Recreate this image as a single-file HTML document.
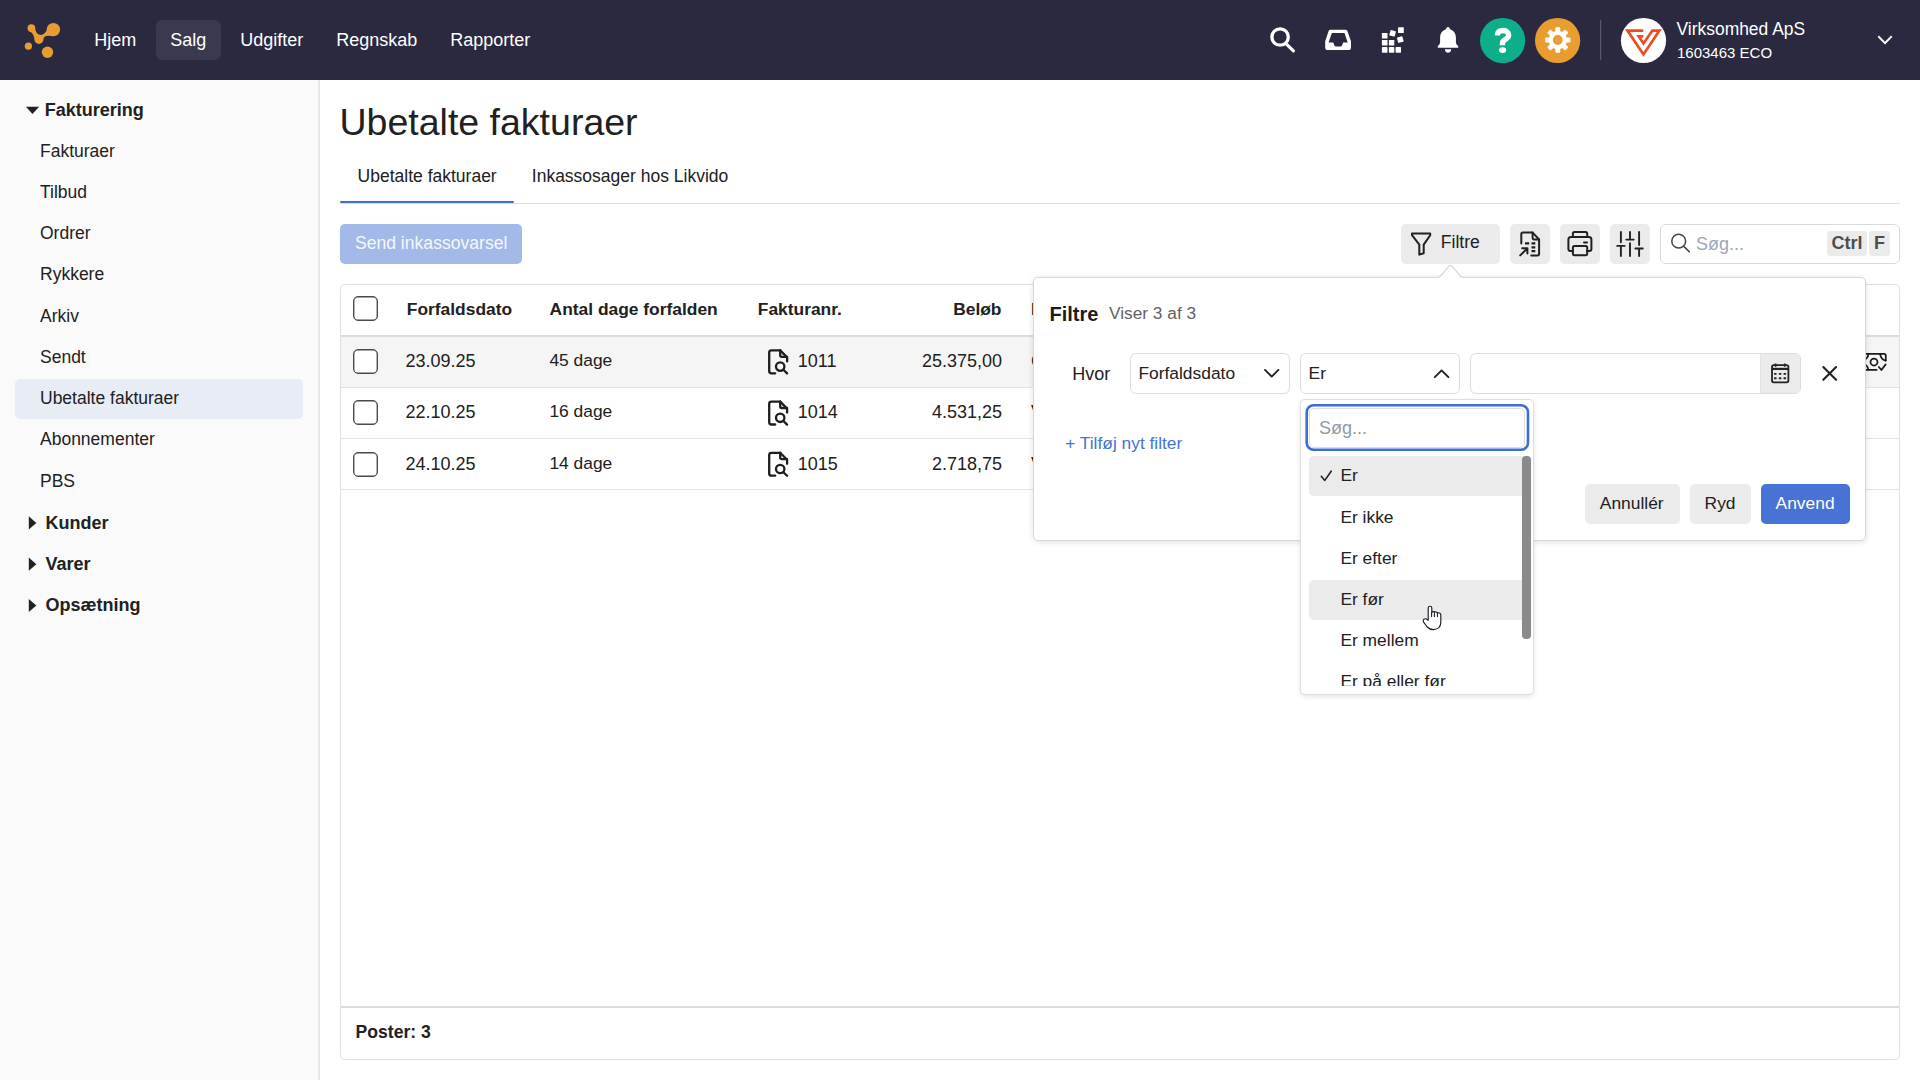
<!DOCTYPE html>
<html lang="da">
<head>
<meta charset="utf-8">
<title>Ubetalte fakturaer</title>
<style>
html,body{margin:0;padding:0;}
body{width:1920px;height:1080px;overflow:hidden;position:relative;background:#fff;font-family:"Liberation Sans",sans-serif;color:#212121;}
.a{position:absolute;}
.t{position:absolute;white-space:nowrap;line-height:1;font-size:18px;}
.b{font-weight:bold;}
svg{position:absolute;overflow:visible;}
#hdr{left:0;top:0;width:1920px;height:80px;background:#2a2940;}
.cb{width:23px;height:23px;border:1px solid #4a4a4a;box-shadow:inset 0 0 0 0.4px #4a4a4a;border-radius:5px;background:#fff;}
#side{left:0;top:80px;width:318px;height:1000px;background:#fafafa;border-right:2px solid #e8e8e8;}
</style>
</head>
<body>
<!-- HEADER -->
<div id="hdr" class="a">
  <svg width="1920" height="80" style="left:0;top:0">
    <g fill="#e99d30">
      <circle cx="31.4" cy="28.1" r="3.9"/>
      <circle cx="53.4" cy="29.6" r="6.7"/>
      <circle cx="38.9" cy="39.4" r="4.5"/>
      <circle cx="28.4" cy="46.2" r="3.6"/>
      <circle cx="47.5" cy="52.3" r="5.7"/>
      <path d="M28.6 30.6 C31.8 32.3 34 35 34.5 39 L43.3 39 C43.5 37 45.5 35.6 48.5 35.7 L53.4 36.3 L51 24 L47.2 28.8 C46 32.8 43.6 34.9 40.8 34.9 C37.8 34.9 35.7 32.6 35.2 28.6 L31.4 28.1 Z"/>
    </g>
  </svg>
  <div class="a" style="left:156px;top:20px;width:65px;height:40px;border-radius:6px;background:#3a394f"></div>
  <span class="t" style="left:94.3px;top:30.6px;color:#fff">Hjem</span>
  <span class="t" style="left:170.2px;top:30.6px;color:#fff">Salg</span>
  <span class="t" style="left:240.3px;top:30.6px;color:#fff">Udgifter</span>
  <span class="t" style="left:336.2px;top:30.6px;color:#fff">Regnskab</span>
  <span class="t" style="left:450.2px;top:30.6px;color:#fff">Rapporter</span>

  <svg width="1920" height="80" style="left:0;top:0">
    <!-- search -->
    <circle cx="1280.1" cy="37" r="8.2" fill="none" stroke="#fff" stroke-width="3.3"/>
    <line x1="1286.2" y1="43.8" x2="1293.4" y2="50.8" stroke="#fff" stroke-width="3.2" stroke-linecap="round"/>
    <!-- inbox -->
    <path fill="#fff" fill-rule="evenodd" d="M1330.4 29.7 L1345.4 29.7 Q1346.9 29.7 1347.4 31 L1351 41.2 L1351 48 Q1351 50.1 1349 50.1 L1327.2 50.1 Q1325.2 50.1 1325.2 48 L1325.2 41.2 L1328.6 31 Q1329 29.7 1330.4 29.7 Z M1331.9 33 L1344.5 33 L1347.7 42.4 L1343.2 42.4 L1342 45.6 Q1341.6 46.6 1340.5 46.6 L1335.9 46.6 Q1334.8 46.6 1334.4 45.6 L1333.2 42.4 L1328.6 42.4 Z"/>
    <!-- grid -->
    <g fill="#fff">
      <rect x="1381.9" y="33" width="5.6" height="5.6" rx="0.6"/>
      <rect x="1381.9" y="40" width="5.6" height="5.6" rx="0.6"/>
      <rect x="1388.9" y="40" width="5.4" height="5.6" rx="0.6"/>
      <rect x="1381.9" y="47.1" width="5.6" height="5.6" rx="0.6"/>
      <rect x="1388.9" y="47.1" width="5.4" height="5.6" rx="0.6"/>
      <rect x="1395.6" y="47.1" width="5.4" height="5.6" rx="0.6"/>
      <rect x="1398" y="27.2" width="5.8" height="5.8" rx="0.6"/>
      <rect x="1389.8" y="30.5" width="5.6" height="5.6" rx="0.6" transform="rotate(15 1392.6 33.3)"/>
      <rect x="1397.5" y="36.8" width="5.6" height="5.6" rx="0.6" transform="rotate(-15 1400.3 39.6)"/>
    </g>
    <!-- bell -->
    <path fill="#fff" d="M1448 26.9 C1449.2 26.9 1449.9 27.9 1449.9 29.2 C1453.6 30.2 1455.9 33.6 1455.9 37.6 L1455.9 42.3 C1455.9 43.9 1456.9 45 1458.2 46.1 L1458.2 47.8 L1437.8 47.8 L1437.8 46.1 C1439.1 45 1440.1 43.9 1440.1 42.3 L1440.1 37.6 C1440.1 33.6 1442.4 30.2 1446.1 29.2 C1446.1 27.9 1446.8 26.9 1448 26.9 Z M1444.9 49.2 L1451.2 49.2 C1451.2 51.2 1449.8 52.7 1448 52.7 C1446.2 52.7 1444.9 51.2 1444.9 49.2 Z"/>
    <!-- help -->
    <circle cx="1502.6" cy="40.5" r="22.6" fill="#0caf8a"/>
    <path d="M1497.4 35.4 C1497.4 31.7 1500 30.5 1503 30.5 C1506.4 30.5 1508.7 32.4 1508.7 35 C1508.7 37.5 1507 38.5 1505.2 39.6 C1503.5 40.6 1502.4 41.8 1502.4 43.6 L1502.4 45.2" fill="none" stroke="#fff" stroke-width="5.3"/>
    <ellipse cx="1502.6" cy="50.1" rx="3.6" ry="2.9" fill="#fff"/>
    <!-- settings -->
    <circle cx="1557.6" cy="40.5" r="22.6" fill="#e99d30"/>
    <g fill="#fff" transform="translate(1557.8 40)">
      <circle r="9.2"/>
      <rect x="-2.4" y="-12.7" width="4.8" height="25.4" rx="1"/>
      <rect x="-2.4" y="-12.7" width="4.8" height="25.4" rx="1" transform="rotate(45)"/>
      <rect x="-2.4" y="-12.7" width="4.8" height="25.4" rx="1" transform="rotate(90)"/>
      <rect x="-2.4" y="-12.7" width="4.8" height="25.4" rx="1" transform="rotate(135)"/>
    </g>
    <circle cx="1557.8" cy="40" r="4.9" fill="#e99d30"/>
    <!-- divider -->
    <rect x="1600" y="20" width="1.2" height="40" fill="#5a596b"/>
    <!-- avatar -->
    <circle cx="1643.5" cy="40.5" r="22.6" fill="#fff"/>
    <path transform="translate(1621 18)" d="M22.3 12.6 L6.4 12.6 L22.5 36.4 L38.4 12.6 L31.4 12.6 L22.5 25.4 L17.7 18.4 L22.3 18.4" fill="none" stroke="#ef4b23" stroke-width="2.7" stroke-linejoin="miter"/>
    <!-- chevron -->
    <path d="M1878.3 36.3 L1885 43.1 L1891.7 36.3" fill="none" stroke="#fff" stroke-width="2"/>
  </svg>
  <span class="t" style="left:1676.5px;top:20.8px;font-size:17.45px;color:#fff">Virksomhed ApS</span>
  <span class="t" style="left:1677px;top:45px;font-size:15px;color:#fff">1603463 ECO</span>
</div>

<!-- SIDEBAR -->
<div id="side" class="a"></div>

<svg width="320" height="1000" style="left:0;top:80px">
  <path d="M25.9 26.7 L39.1 26.7 L32.5 34.1 Z" fill="#212121"/>
  <path d="M28.8 436.3 L36.3 442.9 L28.8 449.5 Z" fill="#212121"/>
  <path d="M28.8 477.6 L36.3 484.2 L28.8 490.8 Z" fill="#212121"/>
  <path d="M28.8 518.9 L36.3 525.5 L28.8 532.1 Z" fill="#212121"/>
</svg>
<div class="a" style="left:15px;top:379px;width:288px;height:40px;border-radius:5px;background:#e8ecf5"></div>
<span class="t b" style="left:44.7px;top:100.9px">Fakturering</span>
<span class="t" style="font-size:17.5px;left:40px;top:142.60px">Fakturaer</span>
<span class="t" style="font-size:17.5px;left:40px;top:183.85px">Tilbud</span>
<span class="t" style="font-size:17.5px;left:40px;top:225.10px">Ordrer</span>
<span class="t" style="font-size:17.5px;left:40px;top:266.35px">Rykkere</span>
<span class="t" style="font-size:17.5px;left:40px;top:307.60px">Arkiv</span>
<span class="t" style="font-size:17.5px;left:40px;top:348.85px">Sendt</span>
<span class="t" style="font-size:17.5px;left:40px;top:390.10px">Ubetalte fakturaer</span>
<span class="t" style="font-size:17.5px;left:40px;top:431.35px">Abonnementer</span>
<span class="t" style="font-size:17.5px;left:40px;top:472.60px">PBS</span>
<span class="t b" style="left:45.4px;top:513.90px">Kunder</span>
<span class="t b" style="left:45.4px;top:555.15px">Varer</span>
<span class="t b" style="left:45.4px;top:596.40px">Opsætning</span>



<!-- MAIN -->
<span class="t" style="left:339.5px;top:104.3px;font-size:37.5px">Ubetalte fakturaer</span>
<span class="t" style="left:357.6px;top:167.9px;font-size:17.5px">Ubetalte fakturaer</span>
<span class="t" style="left:531.8px;top:167.9px;font-size:17.5px">Inkassosager hos Likvido</span>
<div class="a" style="left:340px;top:202.6px;width:1560px;height:1.2px;background:#dedede"></div>
<div class="a" style="left:340px;top:200.8px;width:174px;height:2.6px;border-radius:2px;background:#3f6fd6"></div>

<div class="a" style="left:340px;top:224px;width:182px;height:40px;border-radius:5px;background:#a3b9e7"></div>
<span class="t" style="left:354.9px;top:235.2px;font-size:17.6px;color:#f3f6fc">Send inkassovarsel</span>

<!-- toolbar -->
<div class="a" style="left:1401px;top:224px;width:99px;height:40px;border-radius:5px;background:#ebebeb"></div>
<div class="a" style="left:1510px;top:224px;width:40px;height:40px;border-radius:5px;background:#ebebeb"></div>
<div class="a" style="left:1560px;top:224px;width:40px;height:40px;border-radius:5px;background:#ebebeb"></div>
<div class="a" style="left:1610px;top:224px;width:40px;height:40px;border-radius:5px;background:#ebebeb"></div>
<span class="t" style="left:1440.8px;top:234.4px;font-size:17.6px">Filtre</span>
<div class="a" style="left:1660px;top:224px;width:238px;height:38px;border-radius:6px;border:1px solid #d9d9d9;background:#fff"></div>
<span class="t" style="left:1696px;top:234.5px;color:#9ca8ba">Søg...</span>
<div class="a" style="left:1827px;top:231px;width:40px;height:25px;border-radius:3px;background:#ebebeb"></div>
<div class="a" style="left:1869px;top:231px;width:21px;height:25px;border-radius:3px;background:#ebebeb"></div>
<span class="t b" style="left:1831.5px;top:233.6px;color:#4d4d4d">Ctrl</span>
<span class="t b" style="left:1874px;top:233.6px;color:#4d4d4d">F</span>
<svg width="1920" height="1080" style="left:0;top:0">
  <g fill="none" stroke="#212121" stroke-width="2" stroke-linejoin="round" stroke-linecap="round">
    <path d="M1412 233.6 L1430.2 233.6 L1430.2 235.2 L1423.7 244.6 L1423.7 253.2 L1419.3 254.6 L1419.3 244.6 L1412 235.2 Z"/>
    <path d="M1521.3 243.5 L1521.3 234 Q1521.3 232.4 1522.9 232.4 L1532.4 232.4 L1539.1 239.5 L1539.1 253.9 Q1539.1 255.5 1537.5 255.5 L1531.3 255.5"/>
    <path d="M1532.6 232.6 L1532.6 238 Q1532.6 239.4 1534 239.4 L1539 239.4"/>
    <path d="M1520.2 255.4 L1527.4 248.2 M1522.2 248.2 L1527.4 248.2 L1527.4 253.4" />
    <path d="M1525 243.4 L1529.2 243.4 M1531.5 243.4 L1535.3 243.4 M1531.5 247.3 L1535.3 247.3 M1531.5 251.1 L1535.3 251.1" stroke-width="2.2" stroke-linecap="butt"/>
    <path d="M1572.8 250.9 L1570.4 250.9 Q1568.4 250.9 1568.4 248.9 L1568.4 239.5 Q1568.4 237 1570.9 237 L1589 237 Q1591.4 237 1591.4 239.5 L1591.4 248.9 Q1591.4 250.9 1589.4 250.9 L1587 250.9"/>
    <path d="M1572.9 236.8 L1572.9 233.7 Q1572.9 232.1 1574.5 232.1 L1585.6 232.1 Q1587.2 232.1 1587.2 233.7 L1587.2 236.8"/>
    <path d="M1572.9 247.7 Q1572.9 246.1 1574.5 246.1 L1585.6 246.1 Q1587.2 246.1 1587.2 247.7 L1587.2 253.7 Q1587.2 255.3 1585.6 255.3 L1574.5 255.3 Q1572.9 255.3 1572.9 253.7 Z"/>
    <path d="M1584 242.4 L1587 242.4"/>
    <path d="M1620.9 232 V242.3 M1617.2 245.9 H1624.6 M1620.9 245.9 V256 M1630 232 V239.6 M1626.3 239.6 H1633.7 M1630 243.2 V256 M1639.1 232 V245 M1635.4 248.5 H1642.8 M1639.1 248.5 V256" stroke-width="1.9"/>
  </g>
  <circle cx="1678.7" cy="241.2" r="6.9" fill="none" stroke="#444" stroke-width="1.5"/>
  <line x1="1683.8" y1="246.4" x2="1689.2" y2="251.8" stroke="#444" stroke-width="1.6" stroke-linecap="round"/>
</svg>

<!-- TABLE -->
<div class="a" style="left:340px;top:284px;width:1558px;height:774px;border:1px solid #e0e0e0;border-radius:5px;background:#fff"></div>
<div class="a" style="left:341px;top:335px;width:1558px;height:2px;background:#dcdcdc"></div>
<div class="a" style="left:341px;top:337px;width:1558px;height:50px;background:#f5f5f5"></div>
<div class="a" style="left:341px;top:387px;width:1558px;height:1px;background:#e3e3e3"></div>
<div class="a" style="left:341px;top:438px;width:1558px;height:1px;background:#e3e3e3"></div>
<div class="a" style="left:341px;top:489px;width:1558px;height:1px;background:#e3e3e3"></div>
<div class="a" style="left:341px;top:1006px;width:1558px;height:2px;background:#dcdcdc"></div>
<div class="a cb" style="left:353px;top:296px"></div>
<div class="a cb" style="left:353px;top:349px"></div>
<div class="a cb" style="left:353px;top:400px"></div>
<div class="a cb" style="left:353px;top:452px"></div>
<span class="t b" style="font-size:17.4px;left:406.8px;top:301px">Forfaldsdato</span>
<span class="t b" style="font-size:17.4px;left:549.6px;top:301px">Antal dage forfalden</span>
<span class="t b" style="font-size:17.4px;left:757.8px;top:301px">Fakturanr.</span>
<span class="t b" style="font-size:17.4px;left:901.5px;width:100px;top:301px;text-align:right">Beløb</span>
<span class="t b" style="font-size:17.4px;left:1031px;top:301px">Kunde</span>
<span class="t" style="left:405.5px;top:351.5px">23.09.25</span>
<span class="t" style="font-size:17.4px;left:549.4px;top:352px">45 dage</span>
<span class="t" style="left:797.7px;top:351.5px">1011</span>
<span class="t" style="left:852px;width:150px;top:351.5px;text-align:right">25.375,00</span>
<span class="t" style="left:1031px;top:351.5px">Company</span>
<span class="t" style="left:405.5px;top:402.7px">22.10.25</span>
<span class="t" style="font-size:17.4px;left:549.4px;top:403.2px">16 dage</span>
<span class="t" style="left:797.7px;top:402.7px">1014</span>
<span class="t" style="left:852px;width:150px;top:402.7px;text-align:right">4.531,25</span>
<span class="t" style="left:1031px;top:402.7px">Virksomhed</span>
<span class="t" style="left:405.5px;top:454.9px">24.10.25</span>
<span class="t" style="font-size:17.4px;left:549.4px;top:455.4px">14 dage</span>
<span class="t" style="left:797.7px;top:454.9px">1015</span>
<span class="t" style="left:852px;width:150px;top:454.9px;text-align:right">2.718,75</span>
<span class="t" style="left:1031px;top:454.9px">Virksomhed</span>
<span class="t b" style="left:355.6px;top:1024.2px;font-size:17.6px">Poster: 3</span>
<svg width="1920" height="1080" style="left:0;top:0">
  <g fill="none" stroke="#1e1e1e" stroke-width="2.3" stroke-linecap="round" stroke-linejoin="round">
    <g id="docs">
      <path d="M780.2 350.4 L771.5 350.4 Q769.2 350.4 769.2 352.7 L769.2 371 Q769.2 373.3 771.5 373.3 L775.2 373.3"/>
      <path d="M780.2 350.4 L787.1 357.4 L787.1 361.4"/>
      <path d="M780.2 350.6 L780.2 355.2 Q780.2 356.8 781.8 356.8 L787 356.8"/>
      <circle cx="780.2" cy="366.6" r="4.2"/>
      <path d="M783.4 369.8 L787.1 373.4"/>
    </g>
    <use href="#docs" y="51.2"/>
    <use href="#docs" y="102.4"/>
  </g>
  <g fill="none" stroke="#1a1a1a" stroke-width="1.75" stroke-linecap="round" stroke-linejoin="round">
    <path d="M1862 353.9 H1884 Q1885.8 353.9 1885.8 355.7 V360.6"/>
    <path d="M1880.2 354.2 Q1880.8 359.4 1885.6 360.6"/>
    <path d="M1868.3 354.5 Q1867.8 358.5 1864 360"/>
    <path d="M1864 364 Q1867.8 365.5 1868.3 369.5"/>
    <path d="M1862 369.9 H1876.6"/>
    <circle cx="1874" cy="362" r="3.5"/>
    <path d="M1878.9 367 L1881.4 370 L1885.7 364.4"/>
  </g>
</svg>


<!-- POPOVER -->
<div class="a" style="left:1032.5px;top:276.8px;width:831.5px;height:262px;border:1.2px solid #d8d8dc;border-radius:5px;background:#fff;box-shadow:0 1px 6px rgba(0,0,0,0.12)"></div>
<svg width="1920" height="1080" style="left:0;top:0">
  <rect x="1430" y="276" width="41" height="3" fill="#fff"/>
  <path d="M1429 277.4 L1436.5 277.4 Q1439.6 277.4 1441.6 275 L1448.3 266.8 Q1450.5 264.1 1452.7 266.8 L1459.4 275 Q1461.4 277.4 1464.5 277.4 L1472 277.4" fill="#fff" stroke="#d8d8dc" stroke-width="1.2"/>
</svg>
<span class="t b" style="left:1049.5px;top:304px;font-size:20px;color:#1c1c1c">Filtre</span>
<span class="t" style="left:1109px;top:305.4px;font-size:17.3px;color:#636363">Viser 3 af 3</span>
<span class="t" style="left:1072.3px;top:364.9px">Hvor</span>
<div class="a" style="left:1130px;top:353px;width:158px;height:39px;border:1px solid #dcdcdc;border-radius:6px;background:#fff"></div>
<span class="t" style="left:1138.4px;top:365.2px;font-size:17.4px">Forfaldsdato</span>
<div class="a" style="left:1300px;top:353px;width:158px;height:39px;border:1px solid #dcdcdc;border-radius:6px;background:#fff"></div>
<span class="t" style="left:1308.6px;top:365.2px;font-size:17.4px">Er</span>
<div class="a" style="left:1470px;top:353px;width:329px;height:39px;border:1px solid #dcdcdc;border-radius:6px;background:#fff;overflow:hidden">
  <div class="a" style="left:289px;top:0;width:40px;height:39px;background:#ebebeb;box-shadow:inset 1px 0 0 #e2e2e2"></div>
</div>
<svg width="1920" height="1080" style="left:0;top:0">
  <g fill="none" stroke="#222" stroke-width="1.9" stroke-linecap="round" stroke-linejoin="round">
    <path d="M1265 369.9 L1271.7 376.6 L1278.4 369.9"/>
    <path d="M1434.8 377.2 L1441.6 370.4 L1448.4 377.2"/>
    <path d="M1823.3 367 L1836.1 379.8 M1836.1 367 L1823.3 379.8" stroke-width="2.1"/>
  </g>
  <g fill="none" stroke="#222" stroke-width="1.8">
    <rect x="1772" y="365.2" width="16.4" height="17.2" rx="1.8"/>
    <path d="M1772 368.9 H1788.4" stroke-width="2.2"/>
    <path d="M1775.6 363.5 V366.8 M1784.8 363.5 V366.8" stroke-width="1.7"/>
  </g>
  <g fill="#222">
    <rect x="1774" y="373" width="2.6" height="1.8" rx="0.5"/><rect x="1778.8" y="373" width="2.6" height="1.8" rx="0.5"/><rect x="1783.5" y="373" width="2.6" height="1.8" rx="0.5"/>
    <rect x="1774" y="377.3" width="2.6" height="2" rx="0.5"/><rect x="1778.8" y="377.3" width="2.6" height="2" rx="0.5"/><rect x="1783.5" y="377.3" width="2.6" height="2" rx="0.5"/>
  </g>
</svg>
<span class="t" style="left:1065.2px;top:435px;font-size:17.35px;color:#4673d4">+ Tilføj nyt filter</span>
<div class="a" style="left:1585px;top:483.5px;width:95px;height:40px;border-radius:5px;background:#ebebeb"></div>
<div class="a" style="left:1690px;top:483.5px;width:61px;height:40px;border-radius:5px;background:#ebebeb"></div>
<div class="a" style="left:1761px;top:483.5px;width:89px;height:40px;border-radius:5px;background:#4673d4"></div>
<span class="t" style="left:1599.8px;top:495px;font-size:17.4px">Annullér</span>
<span class="t" style="left:1704.6px;top:495px;font-size:17.4px">Ryd</span>
<span class="t" style="left:1775.6px;top:495px;font-size:17.4px;color:#fff">Anvend</span>

<!-- DROPDOWN -->
<div class="a" style="left:1300.3px;top:399.3px;width:231.5px;height:293.5px;border:1.2px solid #dedede;border-radius:5px;background:#fff;box-shadow:0 2px 5px rgba(0,0,0,0.10)"></div>
<svg width="1920" height="1080" style="left:0;top:0"><rect x="1306.7" y="405.2" width="221.3" height="44.6" rx="7" fill="#fff" stroke="#3e6dd6" stroke-width="2.6"/></svg>
<div class="a" style="left:1309.2px;top:407.6px;width:214px;height:38.6px;border:1px solid #dedede;border-radius:5px;"></div>
<span class="t" style="left:1318.9px;top:418.5px;color:#8d99ad">Søg...</span>
<div class="a" style="left:1308.8px;top:456.3px;width:217px;height:39.5px;border-radius:5px;background:#ebebeb"></div>
<div class="a" style="left:1308.8px;top:580.1px;width:217px;height:39.5px;border-radius:5px;background:#ebebeb"></div>
<div class="a" style="left:1522.3px;top:456px;width:8.4px;height:182.6px;border-radius:4px;background:#8a8a8a"></div>
<div class="a" style="left:1305px;top:454px;width:215px;height:232px;overflow:hidden">
  <span class="t" style="font-size:17.4px;left:35.4px;top:12.9px">Er</span>
  <span class="t" style="font-size:17.4px;left:35.4px;top:54.6px">Er ikke</span>
  <span class="t" style="font-size:17.4px;left:35.4px;top:95.5px">Er efter</span>
  <span class="t" style="font-size:17.4px;left:35.4px;top:136.9px">Er før</span>
  <span class="t" style="font-size:17.4px;left:35.4px;top:177.8px">Er mellem</span>
  <span class="t" style="font-size:17.4px;left:35.4px;top:218.8px">Er på eller før</span>
</div>
<svg width="1920" height="1080" style="left:0;top:0">
  <path d="M1321.3 476.3 L1324.8 480.4 L1331.2 471.2" fill="none" stroke="#222" stroke-width="1.6" stroke-linecap="round" stroke-linejoin="round"/>
  <!-- cursor hand -->
  <path d="M1428.2 620.2 L1428.2 607.9 Q1428.2 606.2 1430 606.2 Q1431.8 606.2 1431.8 607.9 L1431.8 612.4 Q1433 611.1 1434.4 611.8 Q1435.9 611.6 1437.4 612.8 Q1440.8 612.4 1440.8 615 L1440.8 622.5 Q1440.8 626 1438.6 627.9 Q1436.2 629.6 1433.3 629.6 Q1429.6 629.6 1427.2 627 L1423.6 622.1 Q1422.6 620.4 1423.8 619.3 Q1425.2 618.2 1426.8 619.2 Z" fill="#fff" stroke="#1b1b2b" stroke-width="1.15" stroke-linejoin="round"/>
  <path d="M1431.6 612.4 V616.6 M1434.4 612 V616.6 M1437.4 612.9 V616.6" stroke="#1b1b2b" stroke-width="1.1" stroke-linecap="round" fill="none"/>
</svg>


</body>
</html>
